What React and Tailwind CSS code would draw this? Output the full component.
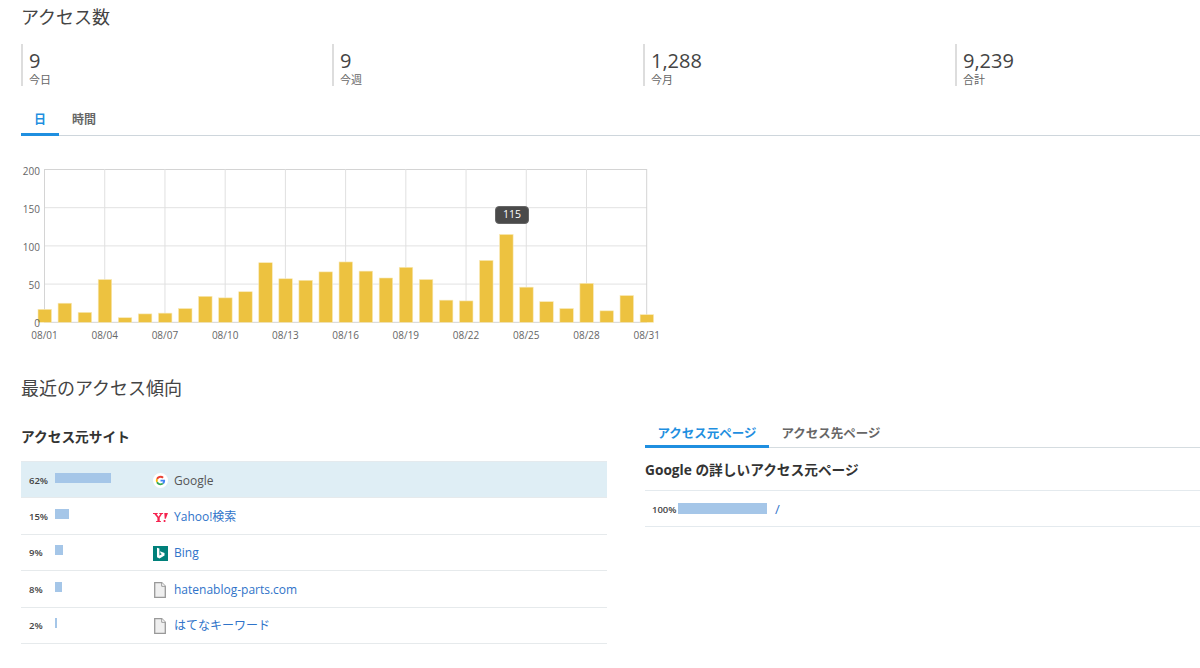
import React from 'react';

const FONT = "font-['Open_Sans','Noto_Sans_CJK_JP',sans-serif]";

const stats = [
  { value: '9', label: '今日' },
  { value: '9', label: '今週' },
  { value: '1,288', label: '今月' },
  { value: '9,239', label: '合計' },
];

const days = [17, 25, 13, 56, 6, 11, 12, 18, 34, 32, 40, 78, 57, 55, 66, 79, 67, 58, 72, 56, 29, 28, 81, 115, 46, 27, 18, 51, 15, 35, 10];
const dayLabels = ['08/01', '08/04', '08/07', '08/10', '08/13', '08/16', '08/19', '08/22', '08/25', '08/28', '08/31'];

function GoogleIcon() {
  return (
    <svg width="15" height="15" viewBox="0 0 48 48">
      <circle cx="24" cy="24" r="24" fill="#fff" />
      <path fill="#EA4335" d="M24 15c2.400 0 4.400.8 6 2.300l4.400-4.400C31.700 10.400 28.200 9 24 9c-5.900 0-11 3.400-13.400 8.300l5.100 4C16.900 17.700 20.100 15 24 15z" />
      <path fill="#4285F4" d="M38.700 24.400c0-1.100-.1-2.100-.3-3.100H24v5.900h8.300c-.4 1.900-1.400 3.500-3 4.600l4.700 3.700c2.900-2.600 4.700-6.500 4.700-11.100z" />
      <path fill="#FBBC05" d="M15.700 26.700c-.3-.9-.5-1.800-.5-2.700s.2-1.900.5-2.700l-5.100-4C9.600 19.300 9 21.600 9 24s.6 4.700 1.600 6.700l5.100-4z" />
      <path fill="#34A853" d="M24 39c4.100 0 7.500-1.300 10-3.600l-4.700-3.700c-1.400.9-3.100 1.500-5.300 1.500-3.900 0-7.100-2.700-8.300-6.300l-5.100 4C13 35.600 18.100 39 24 39z" />
    </svg>
  );
}

function YahooIcon() {
  return (
    <svg width="15" height="9" viewBox="0 0 15 9" fill="#f5234f">
      <path d="M0 0h4.700v1H3.600l1.900 2.700L7.400 1H6.300V0h3.800v1H9L6.700 4.700V8h1.200v1H3.100V8h1.300V4.700L1.300 1H0z" />
      <path d="M11.300 0H15l-2.200 5.800h-1.100zM10.700 7h1.700v2h-1.700z" />
    </svg>
  );
}

function BingIcon() {
  return (
    <svg width="15" height="15" viewBox="0 0 15 15">
      <rect width="15" height="15" fill="#00807a" />
      <path fill="#fff" d="M4 1.800l2.400.8v6.900L9 8.100 7.700 7.500 6.900 5.300l4.600 1.600v2.500l-5 3L4 11.200z" />
    </svg>
  );
}

function DocIcon() {
  return (
    <svg width="12" height="16" viewBox="0 0 12 16">
      <path d="M.7.700h7l3.600 3.600v11h-10.600z" fill="#efefef" stroke="#999" strokeWidth="1.300" />
      <path d="M7.700.700v3.600h3.600" fill="#fff" stroke="#999" />
    </svg>
  );
}

const sites = [
  { pct: '62%', width: 'w-[56px]', name: 'Google', icon: <GoogleIcon />, active: true },
  { pct: '15%', width: 'w-[14px]', name: 'Yahoo!検索', icon: <YahooIcon /> },
  { pct: '9%', width: 'w-[8px]', name: 'Bing', icon: <BingIcon /> },
  { pct: '8%', width: 'w-[7px]', name: 'hatenablog-parts.com', icon: <DocIcon /> },
  { pct: '2%', width: 'w-[2px]', name: 'はてなキーワード', icon: <DocIcon /> },
];

function Tab({ label, active, className }) {
  return (
    <div className={`-mb-px border-b-[3px] text-center font-semibold ${active ? 'border-[#1f8fe0] text-[#1f8fe0]' : 'border-transparent text-[#666]'} ${className}`}>
      {label}
    </div>
  );
}

function Chart() {
  const fontFamily = "'Open Sans','Noto Sans CJK JP',sans-serif";
  return (
    <svg width="660" height="180" viewBox="0 0 660 180" className="block" style={{ fontFamily }}>
      {[0, 1, 2, 3, 4].map((i) => (
        <line key={i} x1="44" x2="647" y1={5.500 + i * 38.200} y2={5.500 + i * 38.200} stroke={i === 0 || i === 4 ? '#d4d4d4' : '#e2e2e2'} />
      ))}
      {dayLabels.map((_, i) => (
        <line key={i} x1={44.500 + i * 60.220} x2={44.500 + i * 60.220} y1="5" y2="158" stroke={i === 0 || i === 10 ? '#d4d4d4' : '#e0e0e0'} />
      ))}
      {days.map((v, i) => (
        <rect key={i} x={38 + i * 20.070} y={158.300 - v * 0.764} width="13.500" height={v * 0.764} fill="#edc240" stroke="#f8e9b8" strokeWidth="0.600" />
      ))}
      {[200, 150, 100, 50, 0].map((v, i) => (
        <text key={v} x="40" y={10.500 + i * 38.200} textAnchor="end" fontSize="10" fill="#666">{v}</text>
      ))}
      {dayLabels.map((d, i) => (
        <text key={d} x={44.500 + i * 60.220} y="175" textAnchor="middle" fontSize="10" fill="#666">{d}</text>
      ))}
    </svg>
  );
}

export default function App() {
  return (
    <div className={`h-[668px] w-[1200px] overflow-hidden bg-white pl-[21px] text-[#333] ${FONT}`}>
      <h1 className="pt-[4px] text-[18px] leading-[26px] font-normal text-[#444]">アクセス数</h1>

      <div className="mt-[14px] grid grid-cols-[311px_311px_312px_1fr]">
        {stats.map((s) => (
          <div key={s.label} className="h-[42px] border-l-2 border-[#ddd] pl-[6px]">
            <div className="pt-[4px] text-[20px] leading-[25px] text-[#444]">{s.value}</div>
            <div className="text-[11px] leading-[14px] text-[#666]">{s.label}</div>
          </div>
        ))}
      </div>

      <div className="mt-[22px] flex h-[28px] border-b border-[#ced6dc] text-[12px] leading-[24px]">
        <Tab label="日" active className="w-[38px]" />
        <Tab label="時間" className="w-[50px]" />
      </div>

      <div className="relative mt-[28px] -ml-[21px] w-[660px]">
        <Chart />
        <div className="absolute top-[42px] left-[495px] flex h-[18px] w-[34px] items-center justify-center rounded-[4px] border border-[#666] bg-[#4a4a4a] text-[10.500px] text-white">
          115
        </div>
      </div>

      <h2 className="mt-[32px] text-[18px] leading-[24px] font-normal text-[#444]">最近のアクセス傾向</h2>

      <div className="mt-[18px] flex">
        <section className="w-[586px]">
          <h3 className="pt-[10px] text-[13.700px] leading-[18px] font-bold text-[#333]">アクセス元サイト</h3>
          <div className="mt-[15px] border-t border-[#e4eaee]">
            {sites.map((s) => (
              <div key={s.name} className={`flex h-[36.400px] items-center border-b border-[#e6eaec] pt-[2px] ${s.active ? 'bg-[#dfeef5]' : ''}`}>
                <div className="w-[34px] pl-[8px] text-[9.500px] font-semibold text-[#444]">{s.pct}</div>
                <div className="flex w-[94px] -translate-y-[3px]">
                  <div className={`h-[10px] bg-[#a5c6e8] ${s.width}`} />
                </div>
                <div className="flex w-[22px] justify-center">{s.icon}</div>
                <div className={`ml-[-2px] pl-[5px] text-[12px] ${s.active ? 'text-[#555]' : 'text-[#2f73c9]'}`}>{s.name}</div>
              </div>
            ))}
          </div>
        </section>

        <section className="ml-[38px] mt-[2px] flex-1">
          <div className="flex h-[28px] border-b border-[#d5dce0] text-[12.500px] leading-[22px]">
            <Tab label="アクセス元ページ" active className="w-[124px] pt-[3px]" />
            <Tab label="アクセス先ページ" className="w-[124px] pt-[3px]" />
          </div>
          <h3 className="mt-[12px] text-[13.700px] leading-[20px] font-bold text-[#333]">Google の詳しいアクセス元ページ</h3>
          <div className="mt-[10px] flex h-[37px] items-center border-y border-[#e4eaee] pt-[3px]">
            <div className="w-[33px] pl-[7px] text-[9.500px] font-semibold text-[#444]">100%</div>
            <div className="h-[11px] w-[89px] -translate-y-[2px] bg-[#a5c6e8]" />
            <div className="ml-[8px] text-[13px] text-[#2f73c9]">/</div>
          </div>
        </section>
      </div>
    </div>
  );
}
